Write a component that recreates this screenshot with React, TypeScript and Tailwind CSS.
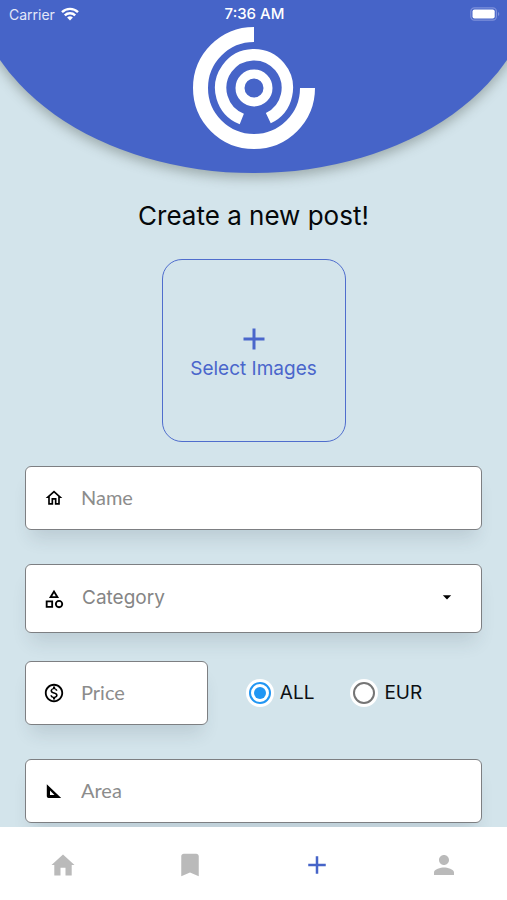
import { useState } from "react";
import type { ReactNode } from "react";
import {
  MdAdd,
  MdArrowDropDown,
  MdBookmark,
  MdOutlineCategory,
  MdOutlineHome,
  MdOutlineMonetizationOn,
  MdPerson,
} from "react-icons/md";

function Logo() {
  return (
    <svg viewBox="-61 -61 122 122" className="size-[122px]" fill="none" stroke="#fff" role="img" aria-label="Logo">
      <path d="M0 -53.5A53.5 53.5 0 1 0 53.5 0" strokeWidth="15" />
      <path d="M-12.2 31A33.3 33.3 0 1 1 14.3 30.1" strokeWidth="11.4" />
      <circle r="14" strokeWidth="9" />
    </svg>
  );
}

function SetSquare() {
  return (
    <svg viewBox="0 0 16 16" className="size-4" fill="currentColor">
      <path fillRule="evenodd" d="M0.8 1.2L15.2 15H2.6A1.8 1.8 0 0 1 0.8 13.2ZM4 7.6V11.9H8.5Z" />
    </svg>
  );
}

function HomeTab() {
  return (
    <svg viewBox="0 0 24 22" className="h-[22px] w-6" fill="currentColor">
      <path d="M12 0.5L0.5 11H3.3V21.5H9.5V13.8H14.5V21.5H20.7V11H23.5Z" />
    </svg>
  );
}

function StatusBar() {
  return (
    <div className="grid h-7 grid-cols-3 items-center pl-[9px] pr-[7px] text-[14px] text-white">
      <div className="flex items-center gap-[6px] text-[#e4e8f8]">
        <span>Carrier</span>
        <svg viewBox="0 0 18 14" className="h-[14px] w-[18px]" fill="none" stroke="#fff" strokeWidth="2.4">
          <path d="M1 5.2A11.4 11.4 0 0 1 17 5.2" />
          <path d="M3.8 8.4A7.4 7.4 0 0 1 14.2 8.4" />
          <path d="M9 13.6L6.1 10.6A4.2 4.2 0 0 1 11.9 10.6Z" fill="#fff" stroke="none" />
        </svg>
      </div>
      <span className="text-center text-[15px] font-medium">7:36 AM</span>
      <svg viewBox="0 0 30 14" className="h-[14px] w-[30px] justify-self-end" fill="none">
        <rect x="0.8" y="0.8" width="25.6" height="12.4" rx="3.6" stroke="#7d90da" strokeWidth="1.2" />
        <rect x="2.5" y="2.4" width="22.2" height="9.2" rx="2" fill="#fff" />
        <path d="M28 5v4a2.2 2.2 0 0 0 0-4Z" fill="#7d90da" />
      </svg>
    </div>
  );
}

function Field({ label, icon }: { label: string; icon: ReactNode }) {
  return (
    <label className="flex h-16 items-center rounded-md border border-[#7d7f82] bg-white pl-[17px] shadow-[0_14px_18px_-6px_rgba(40,60,70,0.14)]">
      <span className="flex w-[22px] shrink-0 justify-center">{icon}</span>
      <input
        aria-label={label}
        placeholder={label}
        className="ml-4 w-full min-w-0 bg-transparent pb-[2px] font-['Lato',sans-serif] text-[20px] leading-6 text-black outline-none placeholder:text-[#8c8c8c]"
      />
    </label>
  );
}

function Currency({ name, checked, onPick }: { name: string; checked: boolean; onPick: () => void }) {
  return (
    <label className="flex items-center gap-[9px] text-[19px] leading-6 text-[#0b0f12]">
      <input
        type="radio"
        name="currency"
        checked={checked}
        onChange={onPick}
        className="grid size-[22px] appearance-none place-content-center rounded-full border-[2px] border-[#757575] bg-white ring-[3px] ring-white before:size-3 before:rounded-full checked:border-[#2196f3] checked:before:bg-[#2196f3]"
      />
      {name}
    </label>
  );
}

export default function App() {
  const [currency, setCurrency] = useState("ALL");
  const [category, setCategory] = useState("");

  return (
    <div className="flex h-screen flex-col bg-[#d3e4eb] font-['Inter','Liberation_Sans',sans-serif]">
      <div className="relative min-h-0 flex-1 overflow-hidden">
        <div className="absolute -inset-x-7 -top-[227px] h-[400px] rounded-[50%] bg-[#4664c8] shadow-[0_5px_12px_rgba(60,70,60,0.35)]" />
        <header className="relative h-[173px]">
          <StatusBar />
          <div className="-mt-px flex justify-center">
            <Logo />
          </div>
        </header>

        <main className="relative px-[25px] pt-[25px]">
          <h1 className="text-center text-[26px] leading-9 text-[#05080a]">Create a new post!</h1>

          <button className="mx-auto mt-[25px] flex h-[183px] w-[184px] flex-col items-center justify-center rounded-[20px] border border-[#4f6dcd] text-[#4a66cb]">
            <MdAdd className="size-9" />
            <span className="text-[19px] leading-6">Select Images</span>
          </button>

          <form className="mt-6 flex flex-col">
            <Field label="Name" icon={<MdOutlineHome className="size-5" />} />

            <div className="relative mt-[34px] flex h-[69px] items-center rounded-md border border-[#7d7f82] bg-white shadow-[0_14px_18px_-6px_rgba(40,60,70,0.14)]">
              <MdOutlineCategory className="pointer-events-none absolute left-[17px] size-[22px]" />
              <select
                aria-label="Category"
                value={category}
                onChange={(e) => setCategory(e.target.value)}
                className="h-full w-full appearance-none bg-transparent pl-14 text-[19px] text-[#858585] outline-none"
              >
                <option value="">Category</option>
                <option value="home">Home</option>
                <option value="vehicle">Vehicle</option>
              </select>
              <MdArrowDropDown className="pointer-events-none absolute right-6 top-[22px] size-5" />
            </div>

            <div className="mt-7 flex items-center">
              <div className="w-2/5">
                <Field label="Price" icon={<MdOutlineMonetizationOn className="size-[22px]" />} />
              </div>
              <div className="ml-[41px] flex gap-[39px]">
                <Currency name="ALL" checked={currency === "ALL"} onPick={() => setCurrency("ALL")} />
                <Currency name="EUR" checked={currency === "EUR"} onPick={() => setCurrency("EUR")} />
              </div>
            </div>

            <div className="mt-[34px]">
              <Field label="Area" icon={<SetSquare />} />
            </div>
          </form>
        </main>
      </div>

      <nav className="grid h-[73px] shrink-0 grid-cols-4 bg-white pt-[2px] text-[#bababa]">
        <a href="#home" aria-label="Home" className="flex items-center justify-center">
          <HomeTab />
        </a>
        <a href="#saved" aria-label="Saved" className="flex items-center justify-center">
          <MdBookmark className="size-[30px]" />
        </a>
        <a href="#new" aria-label="New post" className="flex items-center justify-center text-[#4664c8]">
          <MdAdd className="size-[30px]" />
        </a>
        <a href="#profile" aria-label="Profile" className="flex items-center justify-center">
          <MdPerson className="size-[30px]" />
        </a>
      </nav>
    </div>
  );
}
